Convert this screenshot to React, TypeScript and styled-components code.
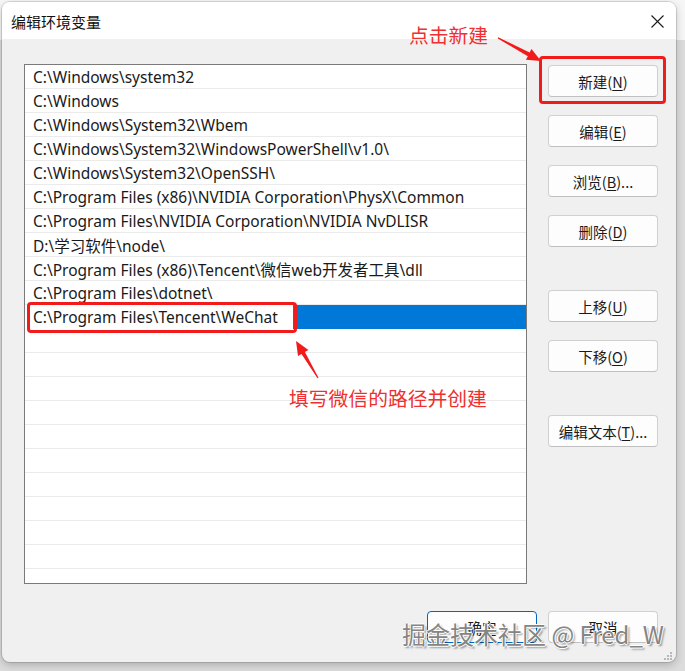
import React from "react";
import styled, { createGlobalStyle } from "styled-components";

const Global = createGlobalStyle`
  html, body { margin: 0; padding: 0; }
  body {
    background: #e4e4e4;
    font-family: "Noto Sans", "Noto Sans CJK SC", sans-serif;
    width: 685px;
    height: 671px;
    overflow: hidden;
  }
`;

const Page = styled.div`
  position: relative;
  width: 685px;
  height: 671px;
  padding: 2px 0 0 2px;
  box-sizing: border-box;
  background: linear-gradient(to bottom, #f6f6f6 0, #f6f6f6 40px, #dcdcdc 40px);
`;

const Window = styled.div`
  width: 674px;
  height: 660px;
  border-radius: 8px;
  overflow: hidden;
  display: flex;
  flex-direction: column;
  background: #f0f0f0;
  box-shadow: 0 0 0 1px rgba(0, 0, 0, 0.12), 0 3px 8px rgba(0, 0, 0, 0.22);
`;

const TitleBar = styled.div`
  height: 37px;
  flex: none;
  background: #ffffff;
  display: flex;
  align-items: center;
  justify-content: space-between;
  padding: 0 12px 0 9px;
`;

const Title = styled.div`
  font-family: "Noto Sans CJK SC", sans-serif;
  font-size: 15px;
  color: #111;
  margin-top: 1px;
`;

const CloseBtn = styled.div`
  width: 14px;
  height: 14px;
  display: flex;
  align-items: center;
  justify-content: center;
  margin-top: 2px;
`;

const Body = styled.div`
  flex: 1;
  display: flex;
  flex-direction: column;
  padding: 25px 18px 19px 22px;
`;

const Main = styled.div`
  display: flex;
  gap: 21px;
`;

const ListBox = styled.div`
  width: 503px;
  height: 520px;
  box-sizing: border-box;
  border: 1px solid #7a7a7a;
  background: #ffffff;
  overflow: hidden;
`;

const Row = styled.div<{ $selected?: boolean }>`
  height: 24px;
  box-sizing: border-box;
  border-bottom: 1px solid ${(p) => (p.$selected ? "#0078d7" : "#ebebeb")};
  background: ${(p) => (p.$selected ? "#0078d7" : "transparent")};
  display: flex;
  align-items: center;
  padding-left: ${(p) => (p.$selected ? "0" : "8px")};
  padding-top: 1px;
  font-size: 15.5px;
  color: #1a1a1a;
  white-space: nowrap;
`;

const EditBox = styled.div`
  width: 268px;
  height: 24px;
  background: #ffffff;
  display: flex;
  align-items: center;
  padding-left: 8px;
  box-sizing: border-box;
`;

const ButtonCol = styled.div`
  width: 110px;
  display: flex;
  flex-direction: column;
  padding-top: 1px;
`;

const Btn = styled.div<{ $gap?: number; $primary?: boolean }>`
  width: 110px;
  height: 32px;
  box-sizing: border-box;
  margin-top: ${(p) => p.$gap ?? 0}px;
  background: #fdfdfd;
  border: 1px solid ${(p) => (p.$primary ? "#0067c0" : "#d0d0d0")};
  border-bottom-color: ${(p) => (p.$primary ? "#0067c0" : "#c0c0c0")};
  border-radius: 4px;
  display: flex;
  align-items: center;
  justify-content: center;
  font-family: "Noto Sans CJK SC", sans-serif;
  font-size: 14.5px;
  color: #1a1a1a;
  u { text-underline-offset: 2px; }
`;

const Footer = styled.div`
  margin-top: 27px;
  display: flex;
  justify-content: flex-end;
  gap: 11px;
`;

const RedBox = styled.div<{ $x: number; $y: number; $w: number; $h: number }>`
  position: absolute;
  left: ${(p) => p.$x}px;
  top: ${(p) => p.$y}px;
  width: ${(p) => p.$w}px;
  height: ${(p) => p.$h}px;
  box-sizing: border-box;
  border: 3px solid #f21b1b;
  border-radius: 4px;
  pointer-events: none;
`;

const RedNote = styled.div<{ $x: number; $y: number }>`
  position: absolute;
  left: ${(p) => p.$x}px;
  top: ${(p) => p.$y}px;
  font-family: "Noto Sans CJK SC", sans-serif;
  font-size: 19.8px;
  line-height: 1;
  color: #f03030;
  white-space: nowrap;
`;

const ArrowLayer = styled.svg`
  position: absolute;
  left: 0;
  top: 0;
  width: 685px;
  height: 671px;
  pointer-events: none;
`;

const Watermark = styled.div`
  position: absolute;
  left: 402px;
  top: 620px;
  font-family: "Noto Sans CJK SC", sans-serif;
  font-size: 24px;
  line-height: 1.2;
  color: #858585;
  white-space: nowrap;
  text-shadow: 1px 0 0 #fff, -1px 0 0 #fff, 0 1px 0 #fff, 0 -1px 0 #fff,
    2px 2px 2px rgba(0, 0, 0, 0.4);
`;

const Grip = styled.svg`
  position: absolute;
  left: 663px;
  top: 651px;
`;

const paths = [
  "C:\\Windows\\system32",
  "C:\\Windows",
  "C:\\Windows\\System32\\Wbem",
  "C:\\Windows\\System32\\WindowsPowerShell\\v1.0\\",
  "C:\\Windows\\System32\\OpenSSH\\",
  "C:\\Program Files (x86)\\NVIDIA Corporation\\PhysX\\Common",
  "C:\\Program Files\\NVIDIA Corporation\\NVIDIA NvDLISR",
  "D:\\学习软件\\node\\",
  "C:\\Program Files (x86)\\Tencent\\微信web开发者工具\\dll",
  "C:\\Program Files\\dotnet\\",
];

export default function App() {
  const empty = Array.from({ length: 11 });
  return (
    <Page>
      <Global />
      <Window>
        <TitleBar>
          <Title>编辑环境变量</Title>
          <CloseBtn>
            <svg width="13" height="13" viewBox="0 0 13 13">
              <path d="M0.5 0.5 L12.5 12.5 M12.5 0.5 L0.5 12.5" stroke="#1a1a1a" strokeWidth="1.1" />
            </svg>
          </CloseBtn>
        </TitleBar>
        <Body>
          <Main>
            <ListBox>
              {paths.map((p) => (
                <Row key={p}>{p}</Row>
              ))}
              <Row $selected>
                <EditBox>C:\Program Files\Tencent\WeChat</EditBox>
              </Row>
              {empty.map((_, i) => (
                <Row key={"e" + i} />
              ))}
            </ListBox>
            <ButtonCol>
              <Btn>新建(<u>N</u>)</Btn>
              <Btn $gap={18}>编辑(<u>E</u>)</Btn>
              <Btn $gap={18}>浏览(<u>B</u>)...</Btn>
              <Btn $gap={18}>删除(<u>D</u>)</Btn>
              <Btn $gap={43}>上移(<u>U</u>)</Btn>
              <Btn $gap={18}>下移(<u>O</u>)</Btn>
              <Btn $gap={43}>编辑文本(<u>T</u>)...</Btn>
            </ButtonCol>
          </Main>
          <Footer>
            <Btn $primary>确定</Btn>
            <Btn>取消</Btn>
          </Footer>
        </Body>
      </Window>

      <RedBox $x={539} $y={56} $w={127} $h={48} />
      <RedBox $x={27} $y={302} $w={270} $h={31} />
      <RedNote $x={409} $y={25}>点击新建</RedNote>
      <RedNote $x={289} $y={388}>填写微信的路径并创建</RedNote>
      <ArrowLayer viewBox="0 0 685 671">
        <polygon
          points="498.2,37.2 529.6,52.6 531.5,49.1 541,61 525.9,59.7 527.8,56.2 497.8,38.4"
          fill="#f21b1b"
        />
        <polygon
          points="318.5,377.7 304.9,352 308.4,349.9 296,341 298,356.1 301.5,354 317.5,378.3"
          fill="#f21b1b"
        />
      </ArrowLayer>
      <Watermark>掘金技术社区 @ Fred_W</Watermark>
      <Grip width="10" height="10" viewBox="0 0 10 10">
        <g fill="#b8b8b8">
          <rect x="7" y="1" width="2" height="2" />
          <rect x="4" y="4" width="2" height="2" />
          <rect x="7" y="4" width="2" height="2" />
          <rect x="1" y="7" width="2" height="2" />
          <rect x="4" y="7" width="2" height="2" />
          <rect x="7" y="7" width="2" height="2" />
        </g>
      </Grip>
    </Page>
  );
}
